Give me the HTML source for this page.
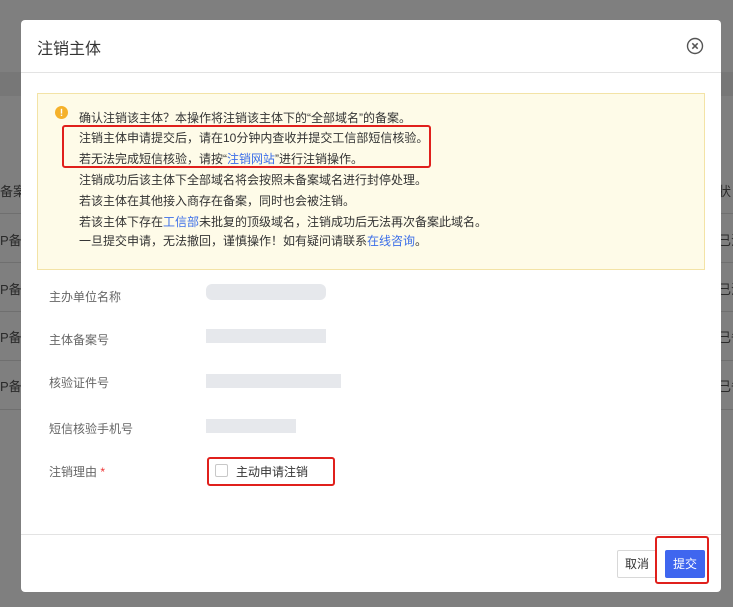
<!DOCTYPE html>
<html><head><meta charset="utf-8"><style>
*{margin:0;padding:0;box-sizing:border-box}
body{width:733px;height:607px;background:#7f7f7f;position:relative;overflow:hidden;font-family:"Liberation Sans","Noto Sans CJK SC",sans-serif;font-size:12px;color:#333}
.a{position:absolute}
.bgt{color:#2a2a2a;font-size:13px;white-space:nowrap}
.line{height:1px;background:#6f6f6f}
.modal{left:21px;top:20px;width:700px;height:572px;background:#fff;border-radius:4px}
.alert{left:16px;top:73px;width:668px;height:177px;background:#fefbe8;border:1px solid #f3e3a6}
.alert p{position:absolute;left:41px;font-size:12px;line-height:16px;color:#333;white-space:nowrap}
.lk{color:#3b6ee8}
.lbl{left:28px;color:#666;font-size:12px}
.blur{background:#e6e8ec}
.red{border:2px solid #e0201c;border-radius:3px}
</style></head><body>
<div class="a" style="left:0;top:72px;width:733px;height:24px;background:#777"></div>
<div class="a bgt" style="left:0;top:181px">备案</div><div class="a bgt" style="left:718px;top:181px">状</div>
<div class="a line" style="left:0;top:213px;width:733px"></div>
<div class="a bgt" style="left:0;top:230px">P备</div><div class="a bgt" style="left:718px;top:230px">已注</div>
<div class="a line" style="left:0;top:262px;width:733px"></div>
<div class="a bgt" style="left:0;top:279px">P备</div><div class="a bgt" style="left:718px;top:279px">已注</div>
<div class="a line" style="left:0;top:311px;width:733px"></div>
<div class="a bgt" style="left:0;top:327px">P备</div><div class="a bgt" style="left:718px;top:327px">已备</div>
<div class="a line" style="left:0;top:360px;width:733px"></div>
<div class="a bgt" style="left:0;top:376px">P备</div><div class="a bgt" style="left:718px;top:376px">已备</div>
<div class="a line" style="left:0;top:409px;width:733px"></div>

<div class="a modal">
 <div class="a" style="left:16px;top:15px;font-size:16px;color:#333">注销主体</div>
 <svg class="a" style="left:665px;top:17px" width="18" height="18" viewBox="0 0 18 18"><circle cx="9" cy="9" r="7.5" fill="none" stroke="#555" stroke-width="1.4"/><path d="M6.3 6.3L11.7 11.7M11.7 6.3L6.3 11.7" stroke="#555" stroke-width="1.5"/></svg>
 <div class="a" style="left:0;top:52px;width:700px;height:1px;background:#e3e3e3"></div>
 <div class="a alert">
  <svg class="a" style="left:17px;top:12px" width="13" height="13" viewBox="0 0 13 13"><circle cx="6.5" cy="6.5" r="6.5" fill="#f5b12a"/><rect x="5.8" y="2.8" width="1.4" height="4.8" fill="#fff"/><rect x="5.8" y="8.6" width="1.4" height="1.4" fill="#fff"/></svg>
  <p style="top:16px">确认注销该主体？本操作将注销该主体下的“全部域名”的备案。</p>
  <p style="top:36px">注销主体申请提交后，请在10分钟内查收并提交工信部短信核验。</p>
  <p style="top:57px">若无法完成短信核验，请按“<span class="lk">注销网站</span>”进行注销操作。</p>
  <p style="top:78px">注销成功后该主体下全部域名将会按照未备案域名进行封停处理。</p>
  <p style="top:99px">若该主体在其他接入商存在备案，同时也会被注销。</p>
  <p style="top:120px">若该主体下存在<span class="lk">工信部</span>未批复的顶级域名，注销成功后无法再次备案此域名。</p>
  <p style="top:139px">一旦提交申请，无法撤回，谨慎操作！如有疑问请联系<span class="lk">在线咨询</span>。</p>
 </div>
 <div class="a red" style="left:41px;top:105px;width:369px;height:43px"></div>
 <div class="a lbl" style="top:268px">主办单位名称</div>
 <div class="a blur" style="left:185px;top:264px;width:120px;height:16px;border-radius:6px"></div>
 <div class="a lbl" style="top:311px">主体备案号</div>
 <div class="a blur" style="left:185px;top:309px;width:120px;height:14px"></div>
 <div class="a lbl" style="top:354px">核验证件号</div>
 <div class="a blur" style="left:185px;top:354px;width:135px;height:14px"></div>
 <div class="a lbl" style="top:400px">短信核验手机号</div>
 <div class="a blur" style="left:185px;top:399px;width:90px;height:14px"></div>
 <div class="a lbl" style="top:443px">注销理由 <span style="color:#e33">*</span></div>
 <div class="a red" style="left:186px;top:437px;width:128px;height:29px"></div>
 <div class="a" style="left:194px;top:444px;width:13px;height:13px;border:1px solid #c8c8c8;border-radius:2px;background:#fff"></div>
 <div class="a" style="left:215px;top:443px;color:#333">主动申请注销</div>
 <div class="a" style="left:0;top:514px;width:700px;height:1px;background:#e3e3e3"></div>
 <div class="a" style="left:596px;top:530px;width:40px;height:28px;border:1px solid #d8d8d8;border-radius:2px;text-align:center;line-height:26px;color:#333">取消</div>
 <div class="a red" style="left:634px;top:516px;width:54px;height:48px"></div>
 <div class="a" style="left:644px;top:530px;width:40px;height:28px;background:#3f66ef;border-radius:2px;text-align:center;line-height:28px;color:#fff">提交</div>
</div>
</body></html>
